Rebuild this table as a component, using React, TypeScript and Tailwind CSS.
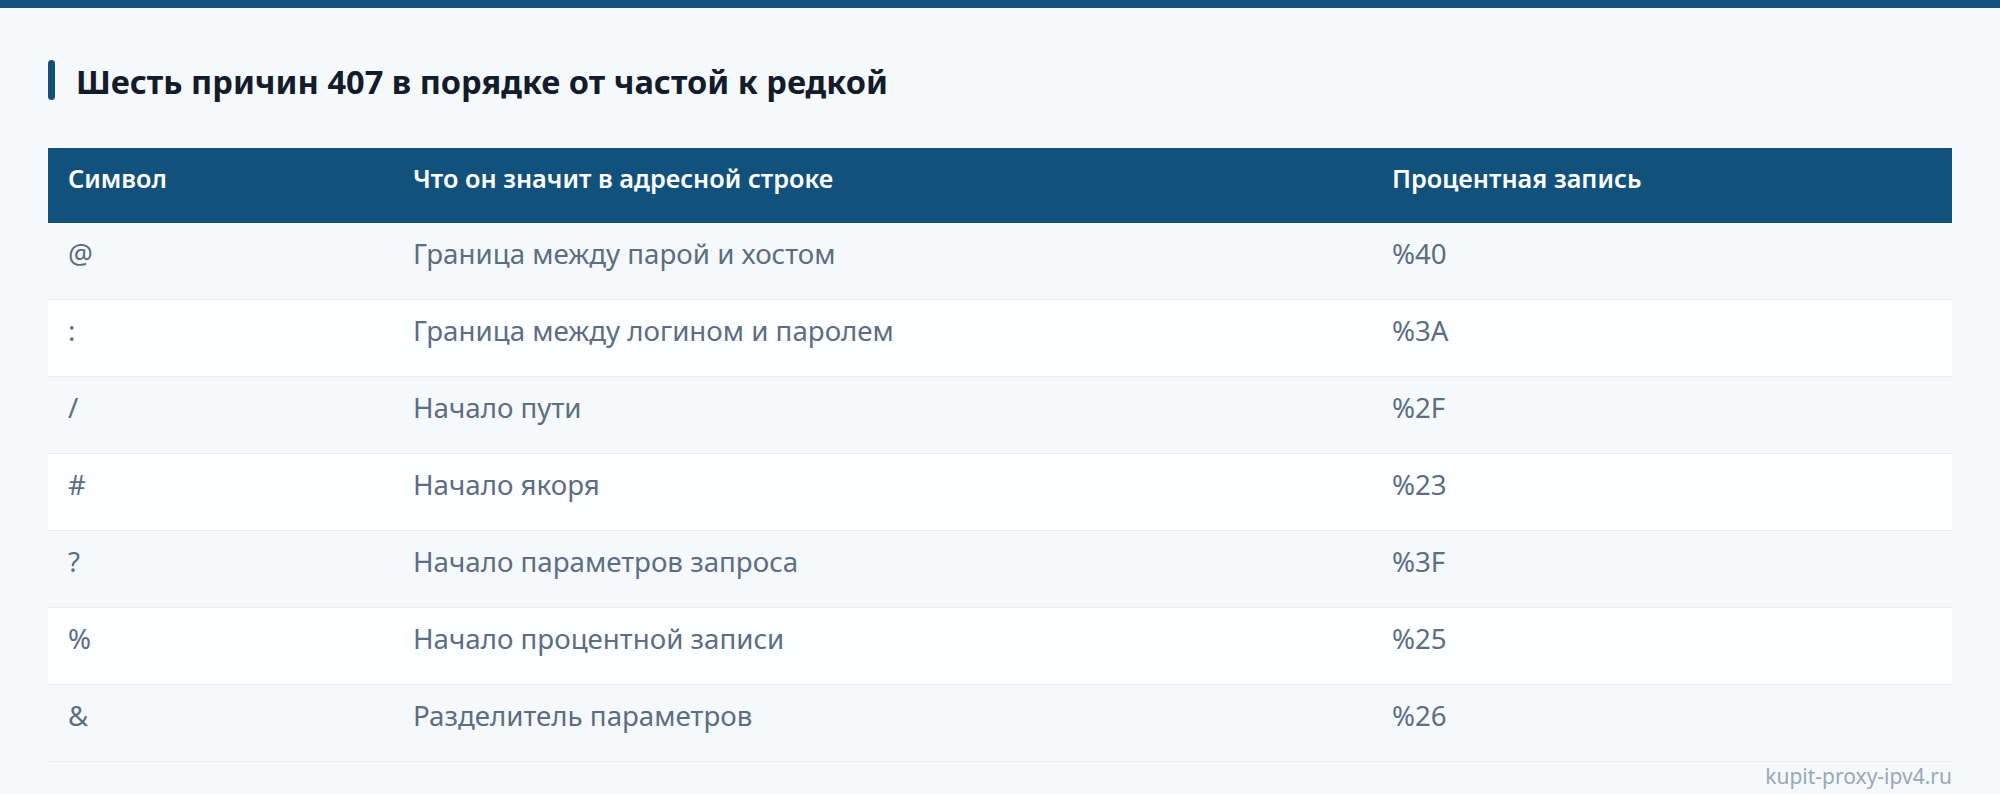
import React from "react";

const rows = [
  { sym: "@", meaning: "Граница между парой и хостом", code: "%40" },
  { sym: ":", meaning: "Граница между логином и паролем", code: "%3A" },
  { sym: "/", meaning: "Начало пути", code: "%2F" },
  { sym: "#", meaning: "Начало якоря", code: "%23" },
  { sym: "?", meaning: "Начало параметров запроса", code: "%3F" },
  { sym: "%", meaning: "Начало процентной записи", code: "%25" },
  { sym: "&", meaning: "Разделитель параметров", code: "%26" },
];

export default function App() {
  return (
    <div className="min-h-screen bg-[#f5f9fc] font-['Noto_Sans',_'Open_Sans',_sans-serif]">
      <div className="h-[8px] bg-[#13517d]" />

      <div className="px-[48px] pt-[52px]">
        {/* Section title */}
        <div className="flex items-center h-[40px] gap-[21px]">
          <span className="w-[7px] h-[40px] rounded-full bg-[#13517d]" />
          <h2 className="text-[32.6px] leading-[40px] pt-[3px] font-bold text-[#141c2b]">
            Шесть причин 407 в порядке от частой к редкой
          </h2>
        </div>

        {/* Table */}
        <div className="mt-[48px]">
          <div className="grid grid-cols-[345px_979px_1fr] h-[75px] bg-[#13517d] text-white text-[25.3px] leading-[36px] font-semibold">
            <div className="pl-[20px] pt-[12px]">Символ</div>
            <div className="pl-[20px] pt-[12px]">Что он значит в адресной строке</div>
            <div className="pl-[20px] pt-[12px]">Процентная запись</div>
          </div>

          {rows.map((r, i) => (
            <div
              key={r.code}
              className={`grid grid-cols-[345px_979px_1fr] h-[77px] border-b border-[#e9eef3] text-[27.7px] leading-[40px] text-[#5d6d83] ${
                i % 2 === 0 ? "bg-[#f6f9fc]" : "bg-[#fdfeff]"
              }`}
            >
              <div className="pl-[20px] pt-[10px]">{r.sym}</div>
              <div className="pl-[20px] pt-[10px]">{r.meaning}</div>
              <div className="pl-[20px] pt-[10px]">{r.code}</div>
            </div>
          ))}

          <div className="text-right text-[21px] leading-[28px] text-[#9aa7b6]">kupit-proxy-ipv4.ru</div>
        </div>
      </div>
    </div>
  );
}
